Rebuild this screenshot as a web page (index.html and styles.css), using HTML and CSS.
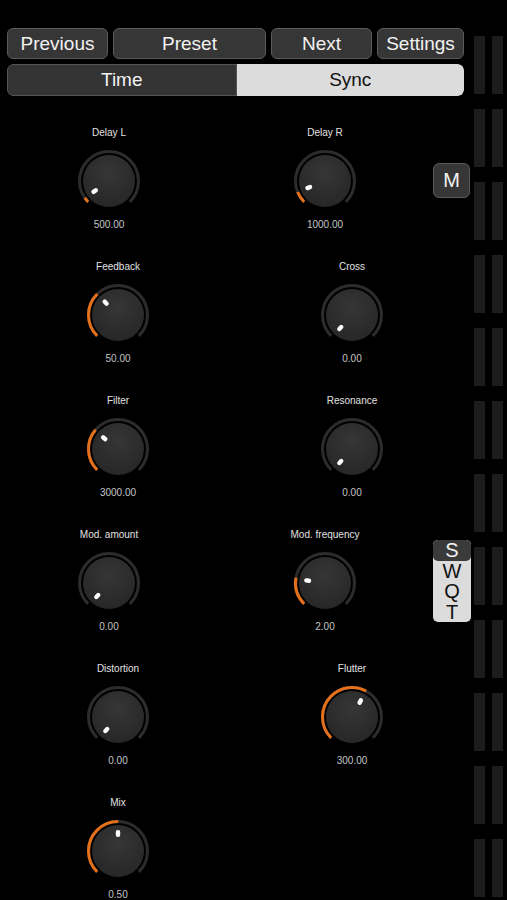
FILE: index.html
```html
<!DOCTYPE html>
<html>

<head>
  <meta charset="utf-8" />
  <title>Delay</title>
  <link rel="stylesheet" href="styles.css">
</head>

<body>
  <svg class="defs" width="0" height="0">
    <defs>
      <radialGradient id="face" cx="50%" cy="35%" r="65%">
        <stop offset="0" stop-color="#363636" />
        <stop offset="1" stop-color="#272727" />
      </radialGradient>
    </defs>
  </svg>

  <div class="app">
    <div class="main">
      <div class="toolbar">
        <button class="btn prev">Previous</button>
        <button class="btn preset">Preset</button>
        <button class="btn next">Next</button>
        <button class="btn settings">Settings</button>
      </div>
      <div class="segmented">
        <div class="seg">Time</div>
        <div class="seg on">Sync</div>
      </div>

      <div class="panel">
        <div class="knobs">
          <div class="row narrow">
            <div class="knob">
              <div class="label">Delay L</div>
              <svg class="dial" viewBox="0 0 70 70">
                <circle class="face" cx="35" cy="35" r="26" />
                <path class="track" d="M14.14 55.86 A29.5 29.5 0 1 1 55.86 55.86" />
                <path class="fill" d="M14.14 55.86 A29.5 29.5 0 1 1 55.86 55.86" stroke-dasharray="5.2 200" />
                <rect class="mark" x="32.8" y="14" width="4.4" height="7" rx="2" transform="rotate(-125 35 35)" />
              </svg>
              <div class="value">500.00</div>
            </div>
            <div class="knob">
              <div class="label">Delay R</div>
              <svg class="dial" viewBox="0 0 70 70">
                <circle class="face" cx="35" cy="35" r="26" />
                <path class="track" d="M14.14 55.86 A29.5 29.5 0 1 1 55.86 55.86" />
                <path class="fill" d="M14.14 55.86 A29.5 29.5 0 1 1 55.86 55.86" stroke-dasharray="11.8 200" />
                <rect class="mark" x="32.8" y="14" width="4.4" height="7" rx="2" transform="rotate(-112 35 35)" />
              </svg>
              <div class="value">1000.00</div>
            </div>
          </div>

          <div class="row wide">
            <div class="knob">
              <div class="label">Feedback</div>
              <svg class="dial" viewBox="0 0 70 70">
                <circle class="face" cx="35" cy="35" r="26" />
                <path class="track" d="M14.14 55.86 A29.5 29.5 0 1 1 55.86 55.86" />
                <path class="fill" d="M14.14 55.86 A29.5 29.5 0 1 1 55.86 55.86" stroke-dasharray="46.3 200" />
                <rect class="mark" x="32.8" y="14" width="4.4" height="7" rx="2" transform="rotate(-45 35 35)" />
              </svg>
              <div class="value">50.00</div>
            </div>
            <div class="knob">
              <div class="label">Cross</div>
              <svg class="dial" viewBox="0 0 70 70">
                <circle class="face" cx="35" cy="35" r="26" />
                <path class="track" d="M14.14 55.86 A29.5 29.5 0 1 1 55.86 55.86" />
                <rect class="mark" x="32.8" y="14" width="4.4" height="7" rx="2" transform="rotate(-138 35 35)" />
              </svg>
              <div class="value">0.00</div>
            </div>
          </div>

          <div class="row wide">
            <div class="knob">
              <div class="label">Filter</div>
              <svg class="dial" viewBox="0 0 70 70">
                <circle class="face" cx="35" cy="35" r="26" />
                <path class="track" d="M14.14 55.86 A29.5 29.5 0 1 1 55.86 55.86" />
                <path class="fill" d="M14.14 55.86 A29.5 29.5 0 1 1 55.86 55.86" stroke-dasharray="43.8 200" />
                <rect class="mark" x="32.8" y="14" width="4.4" height="7" rx="2" transform="rotate(-52 35 35)" />
              </svg>
              <div class="value">3000.00</div>
            </div>
            <div class="knob">
              <div class="label">Resonance</div>
              <svg class="dial" viewBox="0 0 70 70">
                <circle class="face" cx="35" cy="35" r="26" />
                <path class="track" d="M14.14 55.86 A29.5 29.5 0 1 1 55.86 55.86" />
                <rect class="mark" x="32.8" y="14" width="4.4" height="7" rx="2" transform="rotate(-138 35 35)" />
              </svg>
              <div class="value">0.00</div>
            </div>
          </div>

          <div class="row narrow">
            <div class="knob">
              <div class="label">Mod. amount</div>
              <svg class="dial" viewBox="0 0 70 70">
                <circle class="face" cx="35" cy="35" r="26" />
                <path class="track" d="M14.14 55.86 A29.5 29.5 0 1 1 55.86 55.86" />
                <rect class="mark" x="32.8" y="14" width="4.4" height="7" rx="2" transform="rotate(-138 35 35)" />
              </svg>
              <div class="value">0.00</div>
            </div>
            <div class="knob">
              <div class="label">Mod. frequency</div>
              <svg class="dial" viewBox="0 0 70 70">
                <circle class="face" cx="35" cy="35" r="26" />
                <path class="track" d="M14.14 55.86 A29.5 29.5 0 1 1 55.86 55.86" />
                <path class="fill" d="M14.14 55.86 A29.5 29.5 0 1 1 55.86 55.86" stroke-dasharray="28.3 200" />
                <rect class="mark" x="32.8" y="14" width="4.4" height="7" rx="2" transform="rotate(-82 35 35)" />
              </svg>
              <div class="value">2.00</div>
            </div>
          </div>

          <div class="row wide">
            <div class="knob">
              <div class="label">Distortion</div>
              <svg class="dial" viewBox="0 0 70 70">
                <circle class="face" cx="35" cy="35" r="26" />
                <path class="track" d="M14.14 55.86 A29.5 29.5 0 1 1 55.86 55.86" />
                <rect class="mark" x="32.8" y="14" width="4.4" height="7" rx="2" transform="rotate(-138 35 35)" />
              </svg>
              <div class="value">0.00</div>
            </div>
            <div class="knob">
              <div class="label">Flutter</div>
              <svg class="dial" viewBox="0 0 70 70">
                <circle class="face" cx="35" cy="35" r="26" />
                <path class="track" d="M14.14 55.86 A29.5 29.5 0 1 1 55.86 55.86" />
                <path class="fill" d="M14.14 55.86 A29.5 29.5 0 1 1 55.86 55.86" stroke-dasharray="83.9 200" />
                <rect class="mark" x="32.8" y="14" width="4.4" height="7" rx="2" transform="rotate(28 35 35)" />
              </svg>
              <div class="value">300.00</div>
            </div>
          </div>

          <div class="row wide">
            <div class="knob">
              <div class="label">Mix</div>
              <svg class="dial" viewBox="0 0 70 70">
                <circle class="face" cx="35" cy="35" r="26" />
                <path class="track" d="M14.14 55.86 A29.5 29.5 0 1 1 55.86 55.86" />
                <path class="fill" d="M14.14 55.86 A29.5 29.5 0 1 1 55.86 55.86" stroke-dasharray="69.5 200" />
                <rect class="mark" x="32.8" y="14" width="4.4" height="7" rx="2" transform="rotate(0 35 35)" />
              </svg>
              <div class="value">0.50</div>
            </div>
          </div>
        </div>

        <div class="side">
          <button class="btn mono">M</button>
          <div class="wave">
            <div class="wv on">S</div>
            <div class="wv">W</div>
            <div class="wv">Q</div>
            <div class="wv">T</div>
          </div>
        </div>
      </div>
    </div>

    <div class="meters">
      <div class="meter">
        <i></i><i></i><i></i><i></i><i></i><i></i><i></i><i></i><i></i><i></i><i></i><i></i>
      </div>
      <div class="meter">
        <i></i><i></i><i></i><i></i><i></i><i></i><i></i><i></i><i></i><i></i><i></i><i></i>
      </div>
    </div>
  </div>
</body>

</html>
```
FILE: styles.css
```css
html,
body {
  margin: 0;
  height: 100%;
  overflow: hidden;
  background-color: #000;
}

body {
  font-family: "Liberation Sans", Arial, sans-serif;
  color: #eee;
}

.defs {
  position: absolute;
}

.app {
  display: flex;
}

.main {
  width: 464px;
  padding: 28px 0 0 7px;
}

/* top buttons */
.toolbar {
  display: flex;
  gap: 5px;
  width: 457px;
}

.btn {
  height: 31px;
  padding: 0;
  border: 1px solid #5a5a5a;
  border-radius: 6px;
  background-color: #363636;
  color: #f2f2f2;
  font-family: inherit;
  font-size: 19px;
  line-height: 29px;
}

.prev,
.next {
  width: 101px;
}

.preset {
  width: 153px;
}

.settings {
  width: 87px;
}

.segmented {
  display: flex;
  width: 457px;
  height: 32px;
  margin-top: 5px;
  border-radius: 6px;
  overflow: hidden;
}

.seg {
  flex: 1;
  box-sizing: border-box;
  border: 1px solid #555;
  border-radius: 6px 0 0 6px;
  background-color: #333;
  color: #f2f2f2;
  font-size: 19px;
  line-height: 30px;
  text-align: center;
}

.seg.on {
  border: none;
  border-radius: 0 6px 6px 0;
  background-color: #dcdcdc;
  color: #111;
  line-height: 32px;
}

/* knobs */
.panel {
  display: flex;
}

.knobs {
  width: 426px;
  padding-top: 31px;
  display: flex;
  flex-direction: column;
  gap: 30px;
}

.row {
  display: flex;
}

.row.narrow {
  padding-left: 52px;
  gap: 116px;
}

.row.wide {
  padding-left: 61px;
  gap: 134px;
}

.knob {
  width: 100px;
  display: flex;
  flex-direction: column;
  align-items: center;
}

.label,
.value {
  font-size: 10px;
  line-height: 12px;
  white-space: nowrap;
}

.label {
  color: #e2e2e2;
}

.value {
  margin-top: 3px;
  color: #c4c4c4;
}

.dial {
  display: block;
  width: 70px;
  height: 70px;
  margin-top: 7px;
}

.face {
  fill: url(#face);
}

.track,
.fill {
  fill: none;
  stroke-width: 3;
}

.track {
  stroke: #2c2c2c;
}

.fill {
  stroke: #e5701c;
}

.mark {
  fill: #fff;
}

/* side buttons */
.side {
  width: 38px;
  padding-top: 67px;
  display: flex;
  flex-direction: column;
}

.mono {
  width: 37px;
  height: 35px;
  line-height: 33px;
  font-size: 20px;
}

.wave {
  width: 38px;
  margin-top: 342px;
  border-radius: 5px;
  background-color: #dcdcdc;
  color: #111;
  overflow: hidden;
}

.wv {
  height: 20.5px;
  font-size: 20px;
  line-height: 20.5px;
  text-align: center;
}

.wv.on {
  border-radius: 5px;
  background-color: #3a3a3a;
  color: #f2f2f2;
}

/* level meters */
.meters {
  display: flex;
  gap: 7px;
  margin-left: 3px;
  padding-top: 36px;
}

.meter {
  display: flex;
  flex-direction: column;
  gap: 15px;
  width: 11px;
}

.meter i {
  display: block;
  flex: none;
  height: 58px;
  background-color: #1c1c1c;
}
```
